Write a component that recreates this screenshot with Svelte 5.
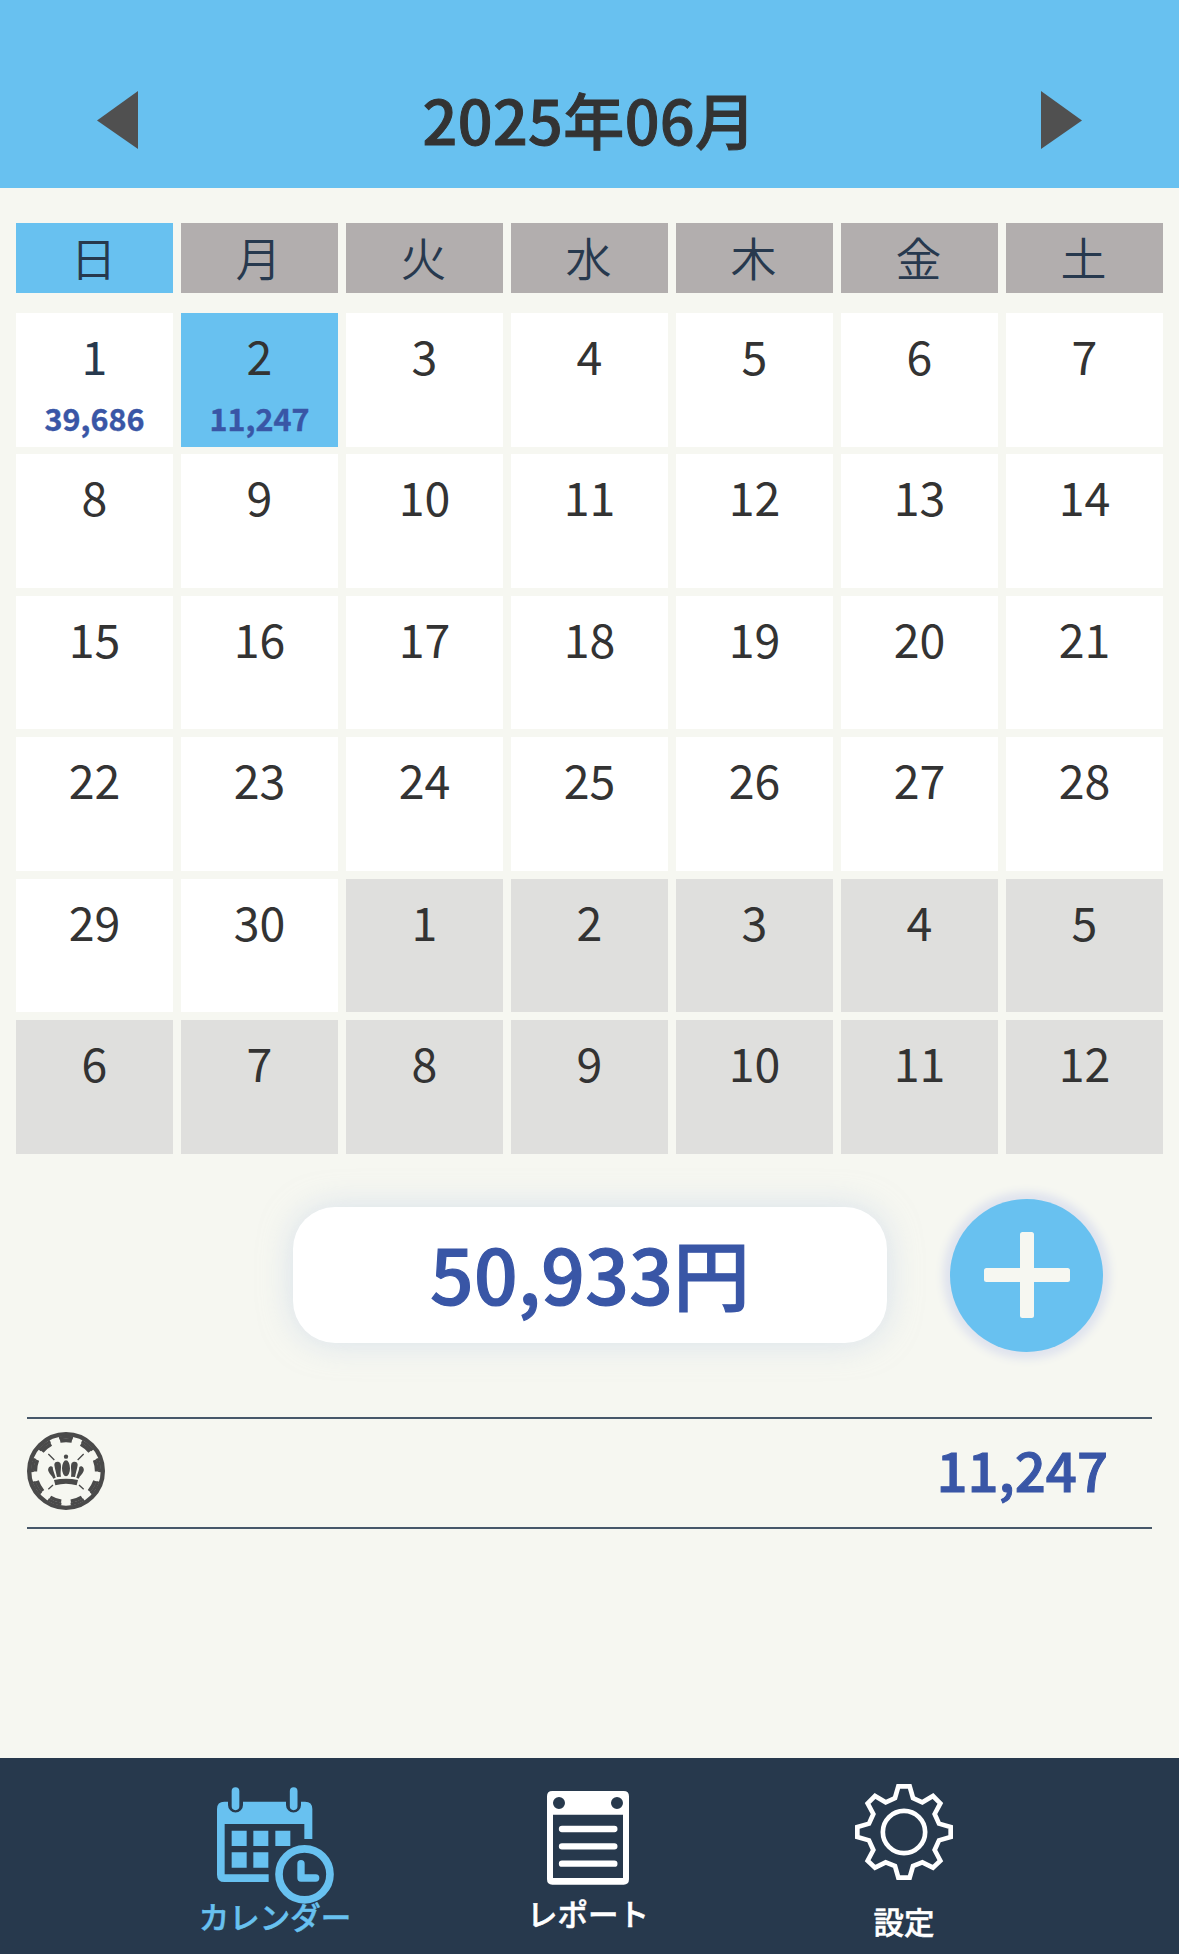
<script>
    const weekdays = ['日', '月', '火', '水', '木', '金', '土'];
    const daysInMonth = 30;
    const today = 1;
    const amounts = { 1: '39,686', 2: '11,247' };
    let selected = 2;

    // Six full weeks, trailing days belong to next month
    const cells = Array.from({ length: 42 }, (_, i) => {
        const outside = i >= daysInMonth;
        return {
            day: outside ? i - daysInMonth + 1 : i + 1,
            outside,
            amount: outside ? '' : amounts[i + 1] || ''
        };
    });

    function selectDay(cell) {
        if (!cell.outside) selected = cell.day;
    }
</script>

<div class="screen">
    <header class="month-bar">
        <button class="arrow" aria-label="前の月">
            <svg width="41" height="58" viewBox="0 0 41 58"><path d="M41 0V58L0 29.5Z" /></svg>
        </button>
        <h1>2025年06月</h1>
        <button class="arrow" aria-label="次の月">
            <svg width="41" height="58" viewBox="0 0 41 58"><path d="M0 0V58L41 29.5Z" /></svg>
        </button>
    </header>

    <main>
        <div class="weekdays">
            {#each weekdays as name, i}
                <div class="weekday" class:active={i === 0}>{name}</div>
            {/each}
        </div>

        <div class="days">
            {#each cells as cell}
                <button
                    class="day"
                    class:outside={cell.outside}
                    class:today={!cell.outside && cell.day === today}
                    class:selected={!cell.outside && cell.day === selected}
                    on:click={() => selectDay(cell)}
                >
                    <span class="number">{cell.day}</span>
                    <span class="day-amount">{cell.amount}</span>
                </button>
            {/each}
        </div>

        <div class="summary">
            <div class="total">50,933円</div>
            <button class="add" aria-label="追加">
                <svg width="86" height="86" viewBox="0 0 86 86">
                    <rect x="36" width="14" height="86" rx="2.5" />
                    <rect y="36" width="86" height="14" rx="2.5" />
                </svg>
            </button>
        </div>

        <div class="entry">
            <!-- Casino chip with crown -->
            <svg class="chip" width="78" height="78" viewBox="0 0 234 234">
                <g fill="none" stroke="#4a4a4a">
                    <circle cx="117" cy="117" r="110.5" stroke-width="13" />
                    <circle cx="117" cy="117" r="101" stroke-width="9" pathLength="360" stroke-dasharray="24 16" stroke-dashoffset="-18" />
                    <circle cx="117" cy="117" r="92" stroke-width="11" pathLength="360" stroke-dasharray="22 18" stroke-dashoffset="-19" />
                    <path d="M64 66L82 84M170 66L152 84M64 172L78 159M170 172L156 159" stroke-width="4" />
                </g>
                <g fill="#4a4a4a">
                    <circle cx="117" cy="74" r="6.5" />
                    <ellipse cx="117" cy="109" rx="12" ry="24" />
                    <path d="M102 134C99 118 105 104 100 93C94 86 81 88 82 99C84 113 88 124 90 135Z" />
                    <path d="M132 134C135 118 129 104 134 93C140 86 153 88 152 99C150 113 146 124 144 135Z" />
                    <path d="M86 137C82 123 78 117 77 105C70 99 61 108 64 117C68 128 75 130 79 140Z" />
                    <path d="M148 137C152 123 156 117 157 105C164 99 173 108 170 117C166 128 159 130 155 140Z" />
                    <path d="M81 144Q117 136 153 144L149 160Q117 151 85 160Z" />
                </g>
            </svg>
            <span class="entry-amount">11,247</span>
        </div>
    </main>

    <nav>
        <a class="tab calendar" href="#calendar">
            <svg width="117" height="117" viewBox="110 140 351 351">
                <path
                    d="M132 184H143V194A22.500 22.500 0 0 0 188 194V184H317V194A22.500 22.500 0 0 0 362 194V184H374Q396 184 396 206V296H372V251H133V402H265V425H132Q110 425 110 403V206Q110 184 132 184Z"
                />
                <path d="M165.500 152V198M340 152V198" stroke-width="23" stroke-linecap="round" />
                <path d="M154 271h45v46h-45ZM219 271h45v46h-45ZM285 271h45v46h-45ZM154 336h45v46h-45ZM219 336h45v46h-45Z" />
                <circle cx="372.500" cy="402" r="76.500" fill="none" stroke-width="23" />
                <path d="M362 370V413H406" fill="none" stroke-width="22" stroke-linecap="round" stroke-linejoin="round" />
            </svg>
            <span>カレンダー</span>
        </a>
        <a class="tab report" href="#report">
            <svg width="82" height="94" viewBox="141 152 246 282">
                <path
                    fill-rule="evenodd"
                    d="M157 152H371Q387 152 387 168V417Q387 433 371 433H157Q141 433 141 417V168Q141 152 157 152ZM159 223V413H369V223ZM159 188a18 18 0 1 0 36 0a18 18 0 1 0 -36 0ZM333 188a18 18 0 1 0 36 0a18 18 0 1 0 -36 0Z"
                />
                <path d="M186 266H343M186 318H343M186 370H343" stroke-width="19" stroke-linecap="round" />
            </svg>
            <span>レポート</span>
        </a>
        <a class="tab settings" href="#settings">
            <svg width="98" height="97" viewBox="105 131 294 291">
                <g fill="none" stroke-width="14">
                    <path
                        d="M235 138H269L279 173L307 186L339 167L361 189L344 221L357 250L392 260V290L357 300L344 329L361 361L339 382L307 366L279 377L269 412H235L225 377L197 366L165 382L143 361L160 329L147 300L112 290V260L147 250L160 221L143 189L165 167L197 186L225 173Z"
                    />
                    <circle cx="252" cy="275" r="63.500" />
                </g>
            </svg>
            <span>設定</span>
        </a>
    </nav>
</div>

<style>
    :global(body) {
        margin: 0;
        background: #f6f7f1;
    }

    .screen {
        display: flex;
        flex-direction: column;
        width: 1179px;
        height: 1954px;
        background: #f6f7f1;
        color: #333;
        font-family: 'Noto Sans CJK JP', sans-serif;
    }

    button {
        border: none;
        margin: 0;
        padding: 0;
        color: inherit;
        font-family: inherit;
    }

    svg {
        display: block;
    }

    /* Month header */
    .month-bar {
        display: flex;
        align-items: center;
        justify-content: space-between;
        box-sizing: border-box;
        height: 188px;
        padding: 52px 97px 0;
        background: #68c1f0;
    }

    .month-bar h1 {
        margin: 0;
        padding-bottom: 2px;
        font-size: 61px;
        line-height: 80px;
        font-weight: 500;
        letter-spacing: 0.4px;
        -webkit-text-stroke: 1px currentColor;
    }

    .arrow {
        background: none;
        fill: #505050;
    }

    /* Calendar */
    main {
        flex: 1;
        padding-top: 35px;
    }

    .weekdays,
    .days {
        display: grid;
        grid-template-columns: repeat(7, 157px);
        column-gap: 8px;
        padding: 0 16px;
    }

    .weekday {
        box-sizing: border-box;
        height: 70px;
        padding-right: 2px;
        background: #b2aeae;
        color: #27394e;
        font-size: 46px;
        line-height: 67px;
        font-weight: 350;
        text-align: center;
    }

    .weekday.active {
        background: #68c1f0;
    }

    .days {
        grid-auto-rows: 133.7px;
        row-gap: 7.7px;
        margin-top: 20px;
    }

    .day {
        display: flex;
        flex-direction: column;
        align-items: center;
        padding-top: 12px;
        background: #fff;
    }

    .day.today {
        color: #27394e;
    }

    .day.selected {
        background: #68c1f0;
    }

    .day.outside {
        background: #dfdfdd;
    }

    .number {
        font-size: 46.5px;
        line-height: 60px;
    }

    .day-amount {
        margin-top: 13px;
        color: #3956a6;
        font-size: 30.5px;
        line-height: 40px;
        font-weight: 700;
        -webkit-text-stroke: 0.4px currentColor;
    }

    /* Monthly total */
    .summary {
        display: flex;
        align-items: center;
        gap: 63px;
        margin-top: 45px;
        padding-left: 293px;
    }

    .total {
        box-sizing: border-box;
        width: 594px;
        height: 136px;
        border-radius: 42px;
        background: #fff;
        box-shadow: 0 0 32px rgba(190, 205, 230, 0.55);
        color: #3956a6;
        font-size: 76.5px;
        line-height: 129px;
        font-weight: 500;
        letter-spacing: 0.4px;
        text-align: center;
        -webkit-text-stroke: 1.2px currentColor;
    }

    .add {
        display: flex;
        align-items: center;
        justify-content: center;
        width: 153px;
        height: 153px;
        border-radius: 50%;
        background: #68c1f0;
        box-shadow: 0 0 8px 7px #dfe3ee;
        fill: #f6f7f1;
    }

    /* Entries of the selected day */
    .entry {
        display: flex;
        align-items: center;
        justify-content: space-between;
        box-sizing: border-box;
        height: 112px;
        margin: 65px 27px 0;
        padding: 0 44px 3px 0;
        border-top: 2px solid #47586a;
        border-bottom: 2px solid #47586a;
    }

    .entry-amount {
        margin-bottom: 4px;
        color: #3956a6;
        font-size: 54.5px;
        line-height: 70px;
        font-weight: 500;
        -webkit-text-stroke: 1px currentColor;
    }

    /* Bottom tabs */
    nav {
        display: grid;
        grid-template-columns: repeat(3, 314.5px);
        justify-content: center;
        height: 196px;
        background: #27394d;
    }

    .tab {
        display: flex;
        flex-direction: column;
        align-items: center;
        color: #fff;
        fill: currentColor;
        stroke-width: 0;
        stroke: currentColor;
        font-size: 30.5px;
        line-height: 36px;
        font-weight: 500;
        text-decoration: none;
    }

    .tab span {
        white-space: nowrap;
        -webkit-text-stroke: 0.5px currentColor;
    }

    .tab.calendar {
        padding-top: 29px;
        color: #68c1f0;
    }

    .tab.calendar span {
        margin-top: -6px;
    }

    .tab.report {
        padding: 33px 3px 0 0;
    }

    .tab.report span {
        margin-top: 10px;
    }

    .tab.settings {
        padding-top: 26px;
    }

    .tab.settings span {
        margin-top: 22px;
    }
</style>
